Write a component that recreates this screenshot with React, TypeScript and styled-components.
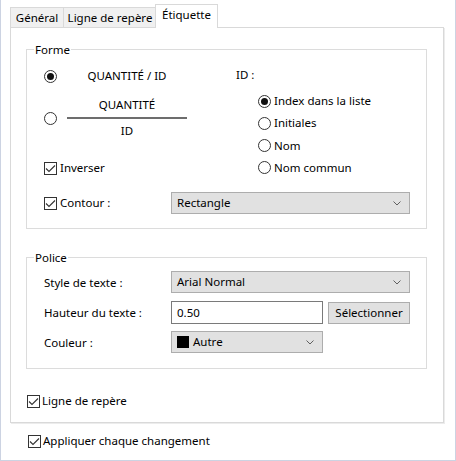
import React from "react";
import styled, { createGlobalStyle } from "styled-components";

const GlobalStyle = createGlobalStyle`
  html, body { margin: 0; padding: 0; background: #fff; }
  body {
    font-family: "Noto Sans", "Segoe UI", sans-serif;
    font-size: 11.5px;
    color: #000;
  }
`;

const Window = styled.div`
  width: 456px;
  height: 461px;
  box-sizing: border-box;
  border: 1px solid #ccd3e2;
  border-top: none;
  padding: 4px 11px 0 9px;
  background: #fff;
  display: flex;
  flex-direction: column;
`;

const TabStrip = styled.div`
  display: flex;
  align-items: flex-end;
  height: 23px;
`;

const Tab = styled.div<{ $w: number; $active?: boolean; $first?: boolean }>`
  box-sizing: border-box;
  width: ${(p) => p.$w}px;
  height: ${(p) => (p.$active ? 24 : 20)}px;
  margin-left: ${(p) => (p.$active ? -2 : 0)}px;
  margin-bottom: ${(p) => (p.$active ? -1 : 0)}px;
  position: relative;
  z-index: ${(p) => (p.$active ? 2 : 1)};
  border: 1px solid #d9d9d9;
  border-bottom: none;
  border-left: ${(p) => (p.$first || p.$active ? "1px solid #d9d9d9" : "none")};
  background: ${(p) => (p.$active ? "#fff" : "#f0f0f0")};
  display: flex;
  align-items: center;
  justify-content: center;
  line-height: 16px;
  padding-bottom: ${(p) => (p.$active ? 3 : 0)}px;
  white-space: nowrap;
`;

const Panel = styled.div`
  box-sizing: border-box;
  height: 396px;
  border: 1px solid #d9d9d9;
  box-shadow: 1px 1px 0 #ececec;
  padding: 21px 15px 0 15px;
  display: flex;
  flex-direction: column;
`;

const Group = styled.div<{ $mt?: number; $pb: number }>`
  box-sizing: border-box;
  width: 401px;
  margin-top: ${(p) => p.$mt ?? 0}px;
  border: 1px solid #dcdcdc;
  padding: 0 0 ${(p) => p.$pb}px 17px;
`;

const Legend = styled.div`
  width: fit-content;
  margin: -8px 0 0 -10px;
  padding: 0 1px;
  background: #fff;
  line-height: 16px;
  height: 16px;
`;

const TopSection = styled.div`
  display: grid;
  grid-template-columns: 192px 1fr;
`;

const Column = styled.div`
  display: flex;
  flex-direction: column;
`;

const Row = styled.div<{ $mt: number; $h: number }>`
  display: flex;
  align-items: center;
  margin-top: ${(p) => p.$mt}px;
  height: ${(p) => p.$h}px;
  line-height: 16px;
  white-space: nowrap;
`;

const RadioCircle = styled.span<{ $on?: boolean }>`
  flex: 0 0 auto;
  box-sizing: border-box;
  width: 13px;
  height: 13px;
  border: 1px solid #333;
  border-radius: 50%;
  background: #fff;
  display: flex;
  align-items: center;
  justify-content: center;
  &::after {
    content: "";
    display: ${(p) => (p.$on ? "block" : "none")};
    width: 7px;
    height: 7px;
    border-radius: 50%;
    background: #111;
  }
`;

const FormatBox = styled.div`
  width: 120px;
  margin-left: 10px;
  display: flex;
  flex-direction: column;
  align-items: center;
  line-height: 16px;
`;

const FractionBar = styled.div`
  align-self: stretch;
  height: 2px;
  background: #6d6d6d;
  margin: 4px 0;
`;

const Label = styled.span<{ $ml?: number }>`
  margin-left: ${(p) => p.$ml ?? 3}px;
`;

const IdTitle = styled.div`
  margin-top: 9px;
  line-height: 16px;
  height: 16px;
`;

const RadioList = styled.div`
  margin-top: 10px;
  padding-left: 22px;
  display: flex;
  flex-direction: column;
  gap: 6.33px;
`;

const CheckBox = styled.span<{ $ml?: number }>`
  flex: 0 0 auto;
  box-sizing: border-box;
  width: 13px;
  height: 13px;
  margin-left: ${(p) => p.$ml ?? 0}px;
  border: 1px solid #333;
  background: #fff;
  display: flex;
  svg { display: block; }
`;

const FieldGrid = styled.div<{ $mt: number; $h: number }>`
  display: grid;
  grid-template-columns: 127px auto;
  align-items: center;
  margin-top: ${(p) => p.$mt}px;
  height: ${(p) => p.$h}px;
  white-space: nowrap;
`;

const Combo = styled.div<{ $w: number }>`
  box-sizing: border-box;
  width: ${(p) => p.$w}px;
  height: 22px;
  border: 1px solid #adadad;
  background: #e1e1e1;
  display: flex;
  align-items: center;
  padding: 0 8px 0 5px;
  line-height: 16px;
`;

const ComboText = styled.span`
  flex: 1;
  display: flex;
  align-items: center;
`;

const Swatch = styled.span`
  width: 12px;
  height: 12px;
  background: #000;
  margin-right: 4px;
`;

const InputRow = styled.div`
  display: flex;
  align-items: center;
`;

const TextInput = styled.div`
  box-sizing: border-box;
  width: 152px;
  height: 23px;
  border: 1px solid #7a7a7a;
  background: #fff;
  padding: 0 5px;
  display: flex;
  align-items: center;
  line-height: 16px;
`;

const Button = styled.div`
  box-sizing: border-box;
  width: 82px;
  height: 22px;
  margin-left: 5px;
  border: 1px solid #adadad;
  background: #e1e1e1;
  display: flex;
  align-items: center;
  justify-content: center;
  line-height: 16px;
`;

const Footer = styled.div`
  margin-top: 10px;
  height: 16px;
  display: flex;
  align-items: center;
  line-height: 16px;
`;

const Check = ({ ml }: { ml?: number }) => (
  <CheckBox $ml={ml}>
    <svg width="11" height="11" viewBox="0 0 11 11">
      <polyline points="1,5.5 4,8.5 10,2.5" fill="none" stroke="#333" strokeWidth="1.1" />
    </svg>
  </CheckBox>
);

const Chevron = () => (
  <svg width="8" height="5" viewBox="0 0 8 5">
    <polyline points="0.5,0.5 4,4 7.5,0.5" fill="none" stroke="#606060" strokeWidth="1" />
  </svg>
);

export default function App() {
  return (
    <>
      <GlobalStyle />
      <Window>
        <TabStrip>
          <Tab $w={54} $first>Général</Tab>
          <Tab $w={93}>Ligne de repère</Tab>
          <Tab $w={63} $active>Étiquette</Tab>
        </TabStrip>
        <Panel>
          <Group $pb={14}>
            <Legend>Forme</Legend>
            <TopSection>
              <Column>
                <Row $mt={8} $h={20}>
                  <RadioCircle $on />
                  <FormatBox>QUANTITÉ / ID</FormatBox>
                </Row>
                <Row $mt={11} $h={42}>
                  <RadioCircle />
                  <FormatBox>
                    <span>QUANTITÉ</span>
                    <FractionBar />
                    <span>ID</span>
                  </FormatBox>
                </Row>
                <Row $mt={21} $h={16}>
                  <Check />
                  <Label>Inverser</Label>
                </Row>
              </Column>
              <Column>
                <IdTitle>ID :</IdTitle>
                <RadioList>
                  <Row $mt={0} $h={16}>
                    <RadioCircle $on />
                    <Label>Index dans la liste</Label>
                  </Row>
                  <Row $mt={0} $h={16}>
                    <RadioCircle />
                    <Label>Initiales</Label>
                  </Row>
                  <Row $mt={0} $h={16}>
                    <RadioCircle />
                    <Label>Nom</Label>
                  </Row>
                  <Row $mt={0} $h={16}>
                    <RadioCircle />
                    <Label>Nom commun</Label>
                  </Row>
                </RadioList>
              </Column>
            </TopSection>
            <FieldGrid $mt={16} $h={22}>
              <Row $mt={0} $h={16}>
                <Check />
                <Label>Contour :</Label>
              </Row>
              <Combo $w={239}>
                <ComboText>Rectangle</ComboText>
                <Chevron />
              </Combo>
            </FieldGrid>
          </Group>

          <Group $mt={28} $pb={15}>
            <Legend>Police</Legend>
            <FieldGrid $mt={5} $h={22}>
              <span>Style de texte :</span>
              <Combo $w={239}>
                <ComboText>Arial Normal</ComboText>
                <Chevron />
              </Combo>
            </FieldGrid>
            <FieldGrid $mt={8} $h={23}>
              <span>Hauteur du texte :</span>
              <InputRow>
                <TextInput>0.50</TextInput>
                <Button>Sélectionner</Button>
              </InputRow>
            </FieldGrid>
            <FieldGrid $mt={7} $h={22}>
              <span>Couleur :</span>
              <Combo $w={152}>
                <ComboText>
                  <Swatch />
                  Autre
                </ComboText>
                <Chevron />
              </Combo>
            </FieldGrid>
          </Group>

          <Row $mt={24} $h={16}>
            <Check ml={1} />
            <Label $ml={2}>Ligne de repère</Label>
          </Row>
        </Panel>
        <Footer>
          <Check ml={18} />
          <Label $ml={2}>Appliquer chaque changement</Label>
        </Footer>
      </Window>
    </>
  );
}
